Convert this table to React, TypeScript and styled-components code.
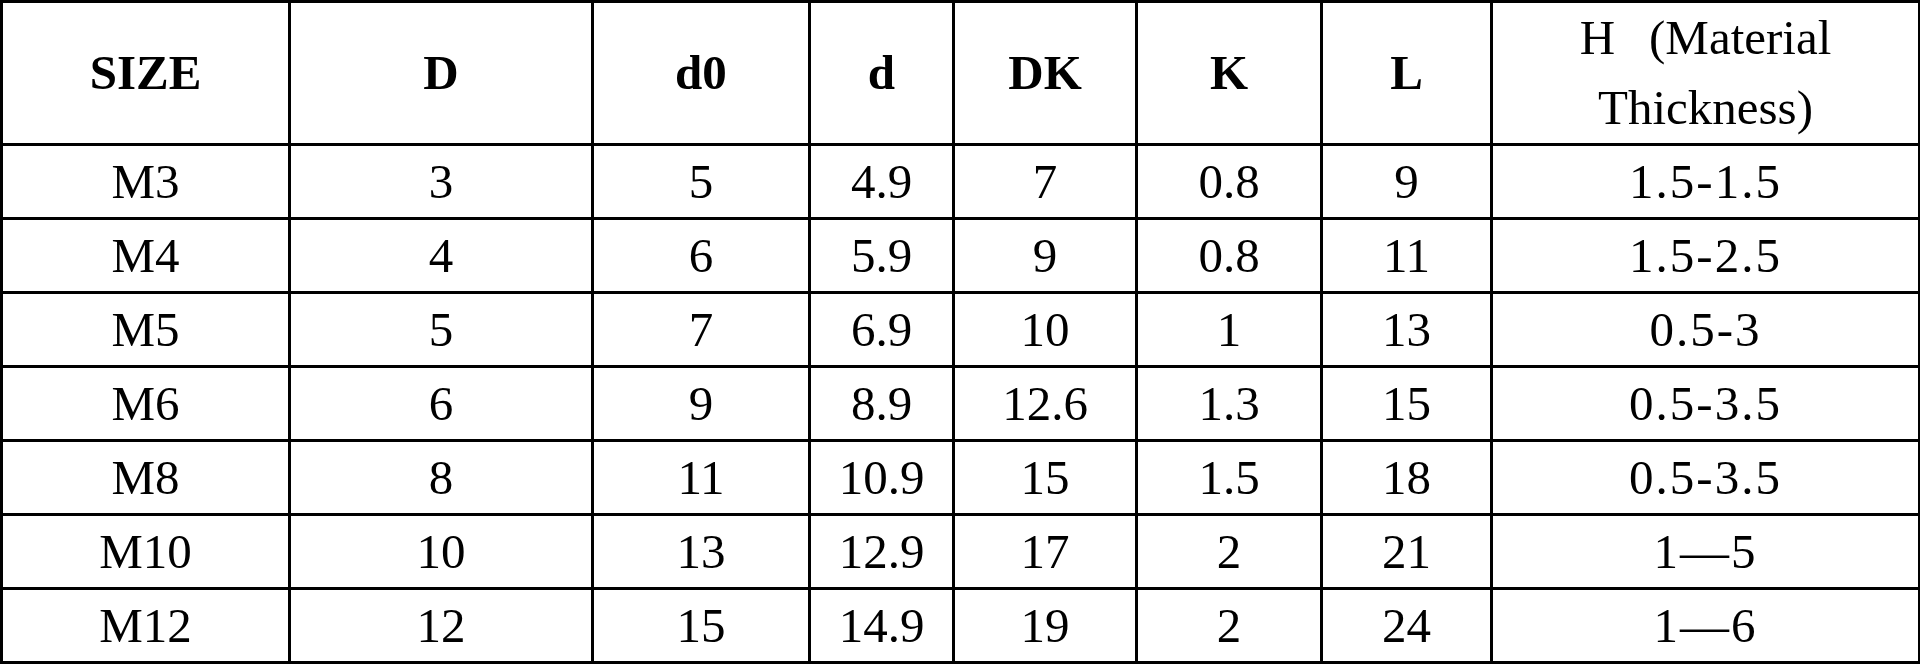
import React from "react";
import styled, { createGlobalStyle } from "styled-components";

const Global = createGlobalStyle`
  html, body {
    margin: 0;
    padding: 0;
    background: #ffffff;
  }
  body, table, th, td {
    font-family: "Liberation Serif", "DejaVu Serif", serif;
    color: #000;
  }
`;

const Table = styled.table`
  width: 1918px;
  table-layout: fixed;
  border-collapse: collapse;
  border: 3px solid #000;
  font-family: "Liberation Serif", "DejaVu Serif", serif;
  font-size: 49px;
  color: #000;
`;

const HeadRow = styled.tr`
  height: 142px;
`;

const BodyRow = styled.tr`
  height: 74px;
`;

const HeadCell = styled.th<{ $plain?: boolean }>`
  border: 3px solid #000;
  padding: 0;
  text-align: center;
  vertical-align: middle;
  font-family: "Liberation Serif", "DejaVu Serif", serif;
  font-size: 49px;
  font-weight: ${(p) => (p.$plain ? 400 : 700)};
  line-height: 70px;
`;

const Cell = styled.td<{ $wide?: boolean }>`
  border: 3px solid #000;
  padding: 0;
  text-align: center;
  vertical-align: middle;
  font-family: "Liberation Serif", "DejaVu Serif", serif;
  font-size: 49px;
  line-height: 1;
  font-weight: 400;
  letter-spacing: ${(p) => (p.$wide ? "2px" : "0")};
`;

const Gap = styled.span`
  display: inline-block;
  width: 34px;
`;

const widths = [288, 303, 217, 144, 183, 185, 170, 428];

const headers = ["SIZE", "D", "d0", "d", "DK", "K", "L"];

const rows: string[][] = [
  ["M3", "3", "5", "4.9", "7", "0.8", "9", "1.5-1.5"],
  ["M4", "4", "6", "5.9", "9", "0.8", "11", "1.5-2.5"],
  ["M5", "5", "7", "6.9", "10", "1", "13", "0.5-3"],
  ["M6", "6", "9", "8.9", "12.6", "1.3", "15", "0.5-3.5"],
  ["M8", "8", "11", "10.9", "15", "1.5", "18", "0.5-3.5"],
  ["M10", "10", "13", "12.9", "17", "2", "21", "1\u20145"],
  ["M12", "12", "15", "14.9", "19", "2", "24", "1\u20146"],
];

export default function App() {
  return (
    <>
      <Global />
      <Table>
        <colgroup>
          {widths.map((w, i) => (
            <col key={i} style={{ width: w }} />
          ))}
        </colgroup>
        <thead>
          <HeadRow>
            {headers.map((h) => (
              <HeadCell key={h}>{h}</HeadCell>
            ))}
            <HeadCell $plain>
              H<Gap />(Material
              <br />
              Thickness)
            </HeadCell>
          </HeadRow>
        </thead>
        <tbody>
          {rows.map((r) => (
            <BodyRow key={r[0]}>
              {r.map((v, i) => (
                <Cell key={i} $wide={i === 7}>
                  {v}
                </Cell>
              ))}
            </BodyRow>
          ))}
        </tbody>
      </Table>
    </>
  );
}
